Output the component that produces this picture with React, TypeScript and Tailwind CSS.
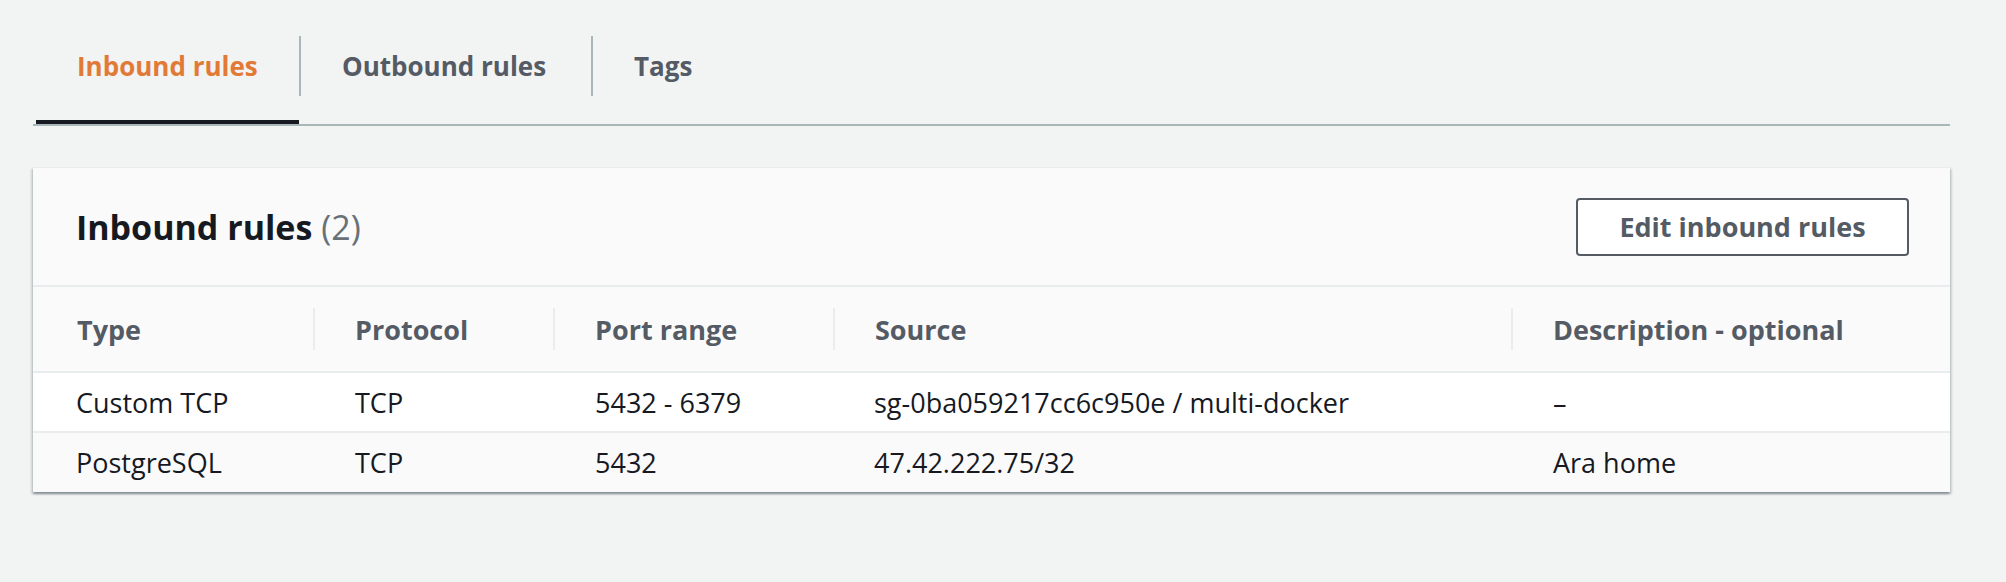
import React from "react";

const rows = [
  { type: "Custom TCP", protocol: "TCP", port: "5432 - 6379", source: "sg-0ba059217cc6c950e / multi-docker", desc: "–", bg: "bg-white" },
  { type: "PostgreSQL", protocol: "TCP", port: "5432", source: "47.42.222.75/32", desc: "Ara home", bg: "bg-[#fafafa]" },
];

const headers = ["Type", "Protocol", "Port range", "Source", "Description - optional"];

const cols = "grid grid-cols-[280px_240px_280px_678px_1fr]";

const Tab = ({ label, active, width }: { label: string; active?: boolean; width: string }) => (
  <div className={`relative flex flex-col ${width}`}>
    <div
      className={`h-[60px] flex items-center pl-[41px] text-[26px] font-bold leading-none whitespace-nowrap ${
        active ? "text-[#e27a37]" : "text-[#545b64]"
      }`}
    >
      {label}
    </div>
    <div className="h-[28px]" />
    {active && <div className="absolute bottom-0 left-0 right-0 h-[4px] bg-[#16191f]" />}
  </div>
);

const Divider = () => <div className="w-[2px] h-[60px] bg-[#aab7b8]" />;

export default function App() {
  return (
    <div
      className="min-h-[582px] w-full bg-[#f2f3f3] pl-[33px] pr-[56px] pt-[36px]"
      style={{ fontFamily: '"Open Sans", "Liberation Sans", sans-serif' }}
    >
      {/* tabs */}
      <div className="flex border-b-2 border-[#aab7b8]">
        <div className="w-[3px]" />
        <Tab label="Inbound rules" active width="w-[263px]" />
        <Divider />
        <Tab label="Outbound rules" width="w-[290px]" />
        <Divider />
        <Tab label="Tags" width="w-[150px]" />
      </div>

      {/* card */}
      <div className="mt-[41px] bg-white shadow-[0_2px_2px_0_rgba(0,28,36,0.3),2px_2px_2px_0_rgba(0,28,36,0.12),-2px_2px_2px_0_rgba(0,28,36,0.12)] border-t border-[#eaeded]">
        <div className="h-[119px] bg-[#fafafa] border-b-2 border-[#eaeded] flex items-center justify-between pl-[43px] pr-[41px]">
          <h2 className="text-[34px] font-bold text-[#16191f] leading-none">
            Inbound rules <span className="font-normal text-[#687078]">(2)</span>
          </h2>
          <button className="w-[333px] h-[58px] rounded-[4px] border-2 border-[#545b64] bg-white flex items-center justify-center text-[27px] font-bold text-[#545b64] leading-none">
            Edit inbound rules
          </button>
        </div>

        <div className={`${cols} h-[86px] bg-[#fafafa] border-b-2 border-[#eaeded]`}>
          {headers.map((h, i) => (
            <div key={h} className="flex items-center">
              {i === 0 ? (
                <div className="pl-[44px] text-[27px] font-bold text-[#545b64] leading-none">{h}</div>
              ) : (
                <div className="h-[42px] border-l-2 border-[#eaeded] pl-[40px] flex items-center text-[27px] font-bold text-[#545b64] leading-none whitespace-nowrap">
                  {h}
                </div>
              )}
            </div>
          ))}
        </div>

        {rows.map((r, i) => (
          <div
            key={r.type}
            className={`${cols} ${i === 0 ? "h-[60px] border-b-2 border-[#eaeded]" : "h-[59px]"} ${r.bg} text-[27px] text-[#16191f] leading-none`}
          >
            <div className="flex items-center pl-[43px] whitespace-nowrap">{r.type}</div>
            <div className="flex items-center pl-[42px] whitespace-nowrap">{r.protocol}</div>
            <div className="flex items-center pl-[42px] whitespace-nowrap">{r.port}</div>
            <div className="flex items-center pl-[41px] whitespace-nowrap">{r.source}</div>
            <div className="flex items-center pl-[42px] whitespace-nowrap">{r.desc}</div>
          </div>
        ))}
      </div>
    </div>
  );
}
